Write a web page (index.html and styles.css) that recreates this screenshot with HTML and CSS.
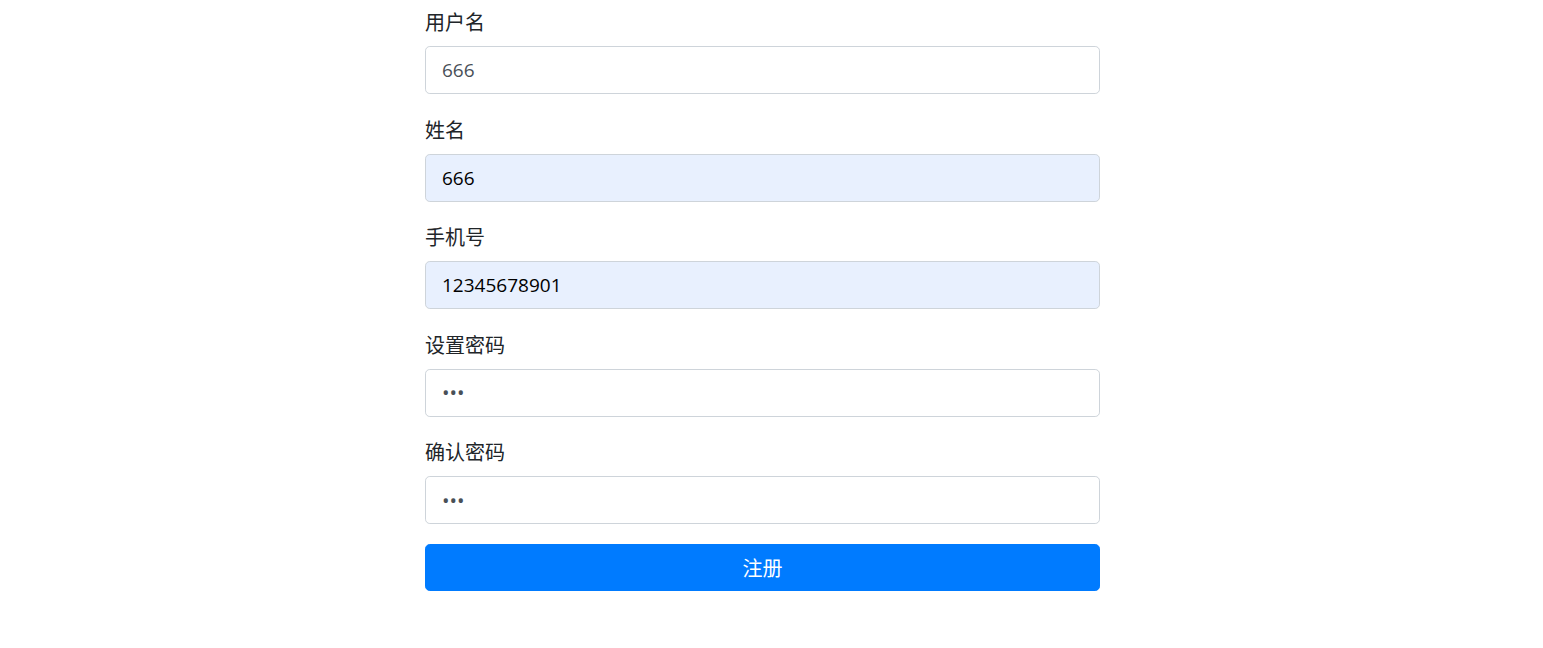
FILE: index.html
```html
<!DOCTYPE html>
<html lang="zh">
<head>
<meta charset="utf-8">
<title>注册</title>
<link rel="stylesheet" href="styles.css">
</head>
<body>
<main class="page">
  <form class="form">
    <div class="group">
      <label class="label" for="u">用户名</label>
      <input class="field" id="u" type="text" placeholder="666">
    </div>
    <div class="group">
      <label class="label" for="n">姓名</label>
      <input class="field autofill" id="n" type="text" value="666">
    </div>
    <div class="group">
      <label class="label" for="p">手机号</label>
      <input class="field autofill" id="p" type="text" value="12345678901">
    </div>
    <div class="group">
      <label class="label" for="s">设置密码</label>
      <input class="field" id="s" type="password" value="666">
    </div>
    <div class="group group-last">
      <label class="label" for="c">确认密码</label>
      <input class="field" id="c" type="password" value="666">
    </div>
    <button class="submit" type="button">注册</button>
  </form>
</main>
</body>
</html>
```
FILE: styles.css
```css
* { box-sizing: border-box; }
html, body { margin: 0; padding: 0; background: #fff; }
body {
  font-family: "Open Sans", "Noto Sans CJK SC", sans-serif;
  color: #212529;
}
.page {
  padding: 7px 0 0 425px;
}
.form {
  width: 675px;
  display: flex;
  flex-direction: column;
}
.group {
  display: flex;
  flex-direction: column;
  margin-bottom: 20.5px;
}
.group-last {
  margin-bottom: 20px;
}
.label {
  font-size: 20px;
  line-height: 30px;
  margin-bottom: 9px;
  font-family: "Noto Sans CJK SC", sans-serif;
}
.field {
  height: 48px;
  padding: 8px 16px;
  font-size: 19px;
  font-family: "Open Sans", "Noto Sans CJK SC", sans-serif;
  color: #495057;
  background: #fff;
  border: 1px solid #ced4da;
  border-radius: 4.8px;
  outline: none;
}
.field::placeholder { color: #495057; opacity: 1; }
.field[type="password"] { font-size: 20px; }
.field.autofill {
  background: #e8f0fe;
  color: #000;
}
.submit {
  height: 47px;
  border: 1px solid #007bff;
  background: #007bff;
  color: #fff;
  font-size: 20px;
  font-family: "Noto Sans CJK SC", sans-serif;
  border-radius: 4.8px;
  padding: 0;
}
```
